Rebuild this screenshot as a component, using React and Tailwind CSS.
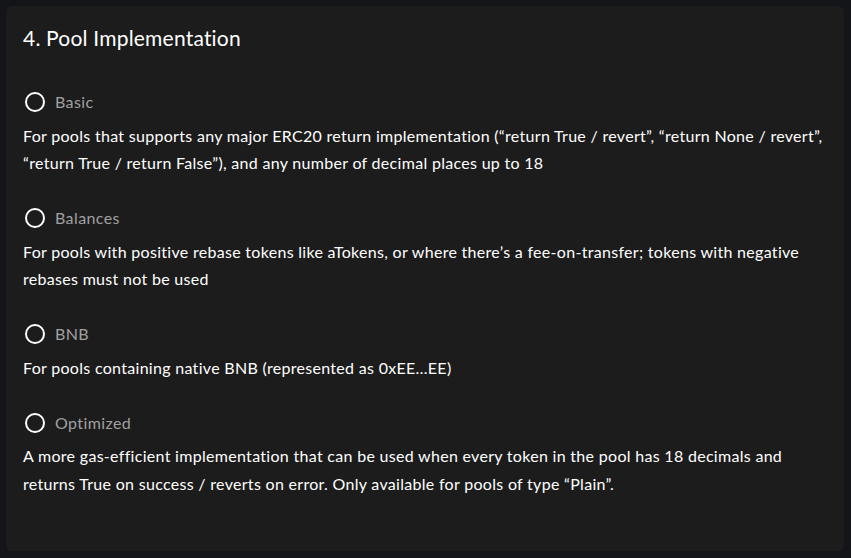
import React, { useState } from 'react';

const options = [
  {
    id: 'basic',
    label: 'Basic',
    description:
      'For pools that supports any major ERC20 return implementation (“return True / revert”, “return None / revert”, “return True / return False”), and any number of decimal places up to 18',
  },
  {
    id: 'balances',
    label: 'Balances',
    description:
      'For pools with positive rebase tokens like aTokens, or where there’s a fee-on-transfer; tokens with negative rebases must not be used',
  },
  {
    id: 'bnb',
    label: 'BNB',
    description: 'For pools containing native BNB (represented as 0xEE…EE)',
  },
  {
    id: 'optimized',
    label: 'Optimized',
    description:
      'A more gas-efficient implementation that can be used when every token in the pool has 18 decimals and returns True on success / reverts on error. Only available for pools of type “Plain”.',
  },
];

const App = () => {
  const [selected, setSelected] = useState(null);

  return (
    <div
      className="h-screen bg-[#131518] p-[6px] pr-[7px]"
      style={{ fontFamily: 'Lato, "Noto Sans", sans-serif' }}
    >
      <div className="h-[545px] rounded-md bg-[#1c1c1c] pl-[17px] pr-[12px] pt-[18px]">
        <h2 className="text-[21px] leading-[28px] tracking-[0.2px] text-white">
          4. Pool Implementation
        </h2>

        <div className="mt-[36px] flex flex-col gap-[27.5px]">
          {options.map((opt) => (
            <div key={opt.id}>
              <button
                onClick={() => setSelected(opt.id)}
                className="flex items-center gap-[10px] pl-[2px]"
              >
                <span className="flex h-5 w-5 items-center justify-center rounded-full border-2 border-white">
                  {selected === opt.id && <span className="h-2 w-2 rounded-full bg-white" />}
                </span>
                <span className="text-[16px] leading-[28px] tracking-[0.4px] text-[#a0a0a0]">
                  {opt.label}
                </span>
              </button>
              <p className="mt-[5.5px] text-[16px] leading-[27.5px] tracking-[0.3px] text-white">
                {opt.description}
              </p>
            </div>
          ))}
        </div>
      </div>
    </div>
  );
};

export default App;
